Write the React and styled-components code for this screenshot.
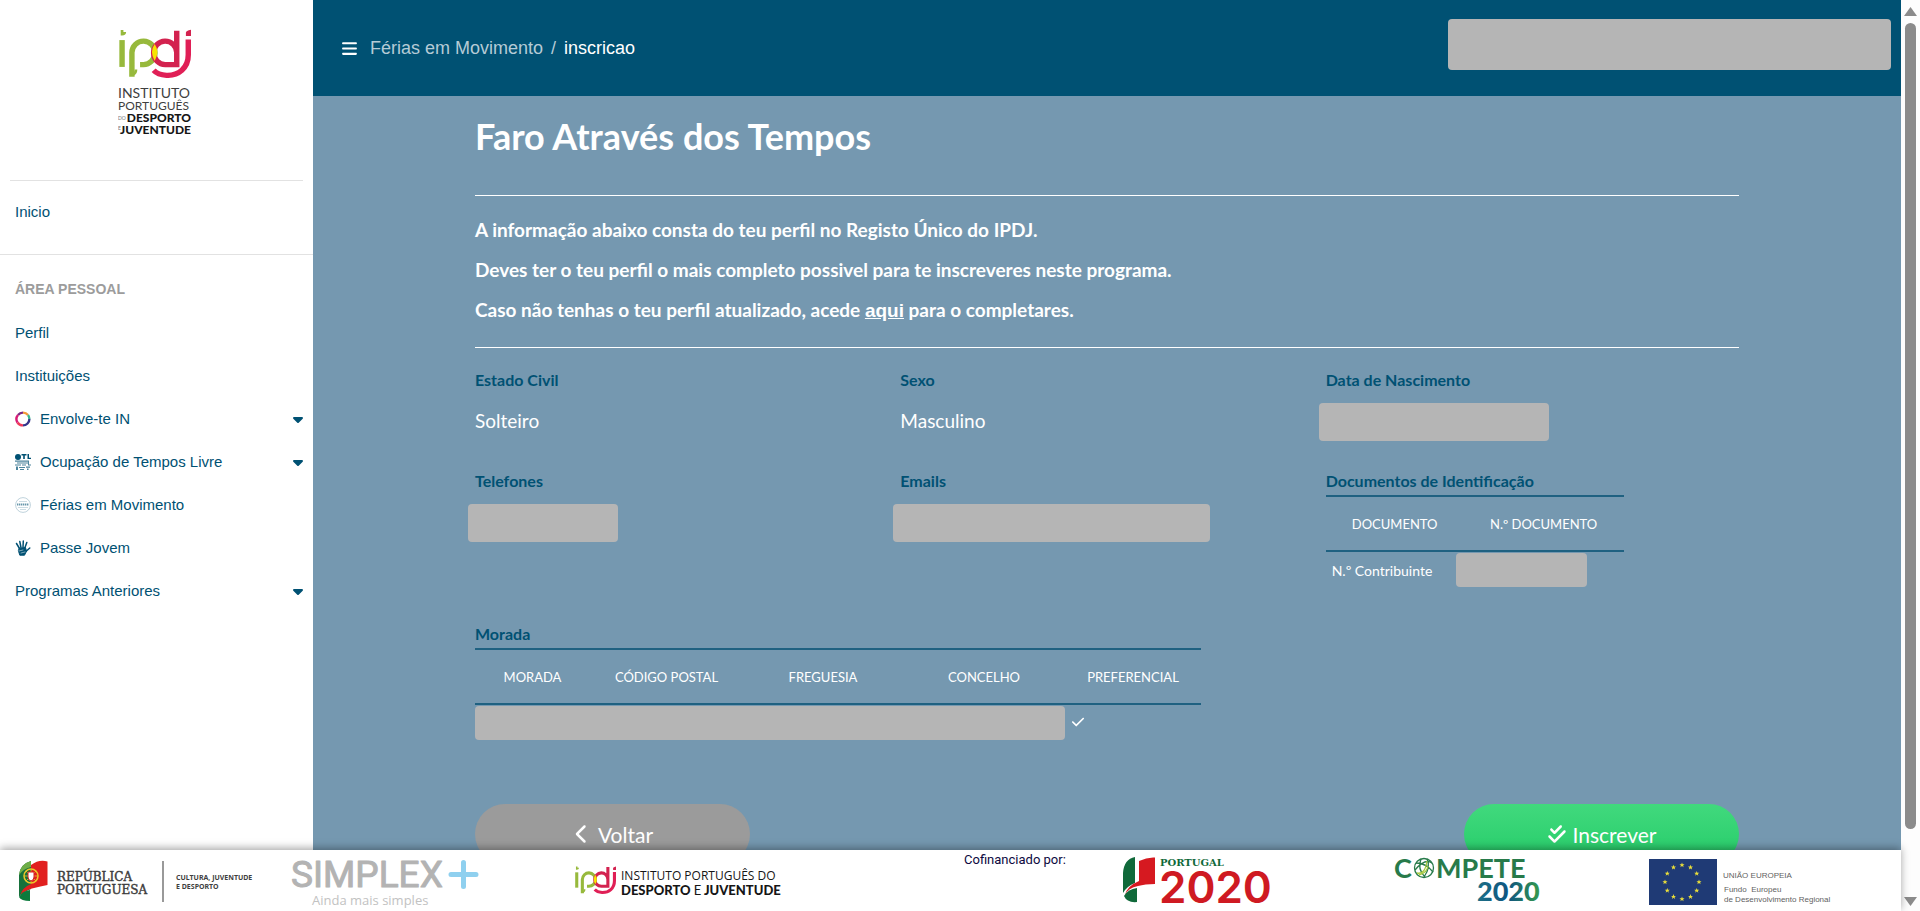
import React from "react";
import styled, { createGlobalStyle } from "styled-components";
import { FaBars, FaCaretDown, FaCheck, FaCheckDouble, FaChevronLeft } from "react-icons/fa6";

const navy = "#005173";
const sans = '"Liberation Sans", Arial, sans-serif';
const round = 'Lato, "Open Sans", sans-serif';

const GlobalStyle = createGlobalStyle`
  *, *::before, *::after { box-sizing: border-box; }
  body { margin: 0; overflow: hidden; background: #fff; font-family: ${sans}; }
`;

const Frame = styled.div`
  display: flex;
  height: 100vh;
`;
const Shell = styled.div`
  flex: 1;
  min-width: 0;
  display: flex;
  flex-direction: column;
`;
const Body = styled.div`
  flex: 1;
  min-height: 0;
  display: flex;
  overflow: hidden;
`;

/* Sidebar */
const Sidebar = styled.aside`
  flex: none;
  width: 313px;
  background: #fff;
`;
const Brand = styled.div`
  display: flex;
  justify-content: center;
  height: 181px;
  margin: 0 10px;
  padding-top: 26px;
  border-bottom: 1px solid #e2e2e2;
`;
const HomeArea = styled.div`
  height: 74px;
  padding-top: 9px;
  border-bottom: 1px solid #e2e2e2;
`;
const SectionTitle = styled.h2`
  margin: 24px 0 12px;
  padding-left: 15px;
  font: bold 14px/20px ${sans};
  color: #9c9c9c;
`;
const Menu = styled.ul`
  list-style: none;
  margin: 0;
  padding: 0;
`;
const MenuLink = styled.a`
  display: flex;
  align-items: center;
  height: 43px;
  padding: 0 10px 0 15px;
  font-size: 15px;
  color: ${navy};
  text-decoration: none;
  > svg:first-child { margin-right: 9px; }
`;
const Caret = styled(FaCaretDown)`
  margin-left: auto;
  width: 10px;
  height: 16px;
`;

/* Main */
const Main = styled.main`
  flex: 1;
  min-width: 0;
  background: #7598b0;
`;
const TopBar = styled.header`
  display: flex;
  justify-content: space-between;
  height: 96px;
  padding: 0 10px 0 28px;
  background: ${navy};
`;
const Crumbs = styled.nav`
  display: flex;
  align-items: center;
  gap: 8px;
  font-size: 18px;
  color: #b5cbd6;
`;
const MenuButton = styled.button`
  display: flex;
  padding: 0;
  border: 0;
  margin-right: 4px;
  background: none;
  color: #fff;
  font-size: 17px;
`;
const CrumbLink = styled.a`
  color: #b5cbd6;
  text-decoration: none;
`;
const Current = styled.span`
  color: #fff;
`;
const Redacted = styled.div`
  width: ${(p) => p.$width}px;
  height: ${(p) => p.$height}px;
  margin: ${(p) => p.$margin || "0"};
  border-radius: 4px;
  background: #b5b5b5;
`;
const Content = styled.div`
  padding: 16px 162px;
  font-family: ${round};
  color: #fff;
`;
const Title = styled.h1`
  margin: 0 0 35px;
  font-size: 36px;
  line-height: 48px;
  font-weight: bold;
`;
const Intro = styled.div`
  padding: 14px 0 16px;
  border-top: 1px solid #fff;
  border-bottom: 1px solid #fff;
`;
const IntroLine = styled.p`
  margin: 0;
  font-size: 19px;
  line-height: 40px;
  font-weight: bold;
  a { font-family: ${sans}; color: #fff; }
`;
const Fields = styled.div`
  display: grid;
  grid-template-columns: repeat(3, 1fr);
  gap: 28px 12px;
  margin-top: 20px;
`;
const Label = styled.h3`
  margin: 0;
  font-size: 16px;
  line-height: 24px;
  font-weight: bold;
  color: ${navy};
`;
const Value = styled.p`
  margin: 10px 0 0;
  font-size: 19px;
  line-height: 38px;
`;
const Table = styled.table`
  margin-top: 2px;
  width: ${(p) => p.$width}px;
  table-layout: fixed;
  border-collapse: separate;
  border-spacing: 0;
  font-size: 14px;
  th {
    height: 57px;
    padding: 0 0 0 ${(p) => p.$indent || 0}px;
    border-top: 2px solid #1f6181;
    border-bottom: 2px solid #1f6181;
    font-size: 13px;
    font-weight: normal;
    text-align: center;
  }
  td { height: 36px; padding: 0 6px; }
`;
const FlushCell = styled.td`
  && { padding: 0; }
`;
const Address = styled.section`
  margin-top: 34px;
`;
const Actions = styled.div`
  display: flex;
  justify-content: space-between;
  margin-top: 63px;
`;
const Action = styled.button`
  display: flex;
  align-items: center;
  justify-content: center;
  gap: 6px;
  width: 275px;
  height: 60px;
  border: 0;
  border-radius: 30px;
  background: ${(p) => (p.$primary ? "linear-gradient(#41d97d, #25cc69)" : "#9b9b9b")};
  color: #fff;
  font: 21px ${round};
`;

/* Footer */
const Footer = styled.footer`
  position: relative;
  flex: none;
  display: grid;
  grid-template-columns: 290fr 285fr 389fr 158fr 272fr 254fr 253fr;
  height: 61px;
  background: #fff;
  box-shadow: 0 -2px 8px rgba(0, 0, 0, 0.35);
  svg { display: block; overflow: visible; }
`;
const Funding = styled.span`
  padding-top: 1px;
  font: 13px/18px Roboto, sans-serif;
  color: #0c0940;
`;

/* Window scroll rail */
const Rail = styled.div`
  flex: none;
  width: 19px;
  display: flex;
  flex-direction: column;
  align-items: center;
  gap: 7px;
  padding: 7px 0 5px;
  background: #fdfdfd;
  svg { display: block; }
`;
const RailTrack = styled.div`
  flex: 1;
  width: 11px;
`;
const RailThumb = styled.div`
  height: 93%;
  border-radius: 6px;
  background: #8b8b8b;
`;

function IpdjMark({ width, height }) {
  return (
    <svg width={width} height={height} viewBox="60 43 212 146" preserveAspectRatio="none" fill="none">
      <g stroke="#97b93c" strokeWidth="16">
        <path d="M69 76V156" />
        <path d="M69 46v12q8 0 8-6" strokeWidth="8" />
        <path d="M98 185V113a34 35 0 1 1 34 36h-10" />
        <path d="M98 178q12 0 12-14" strokeWidth="8" />
      </g>
      <path d="M230 48V113a34 35 0 1 0-34 36h34V108" stroke="#d3224f" strokeWidth="16" />
      <path d="M264 74V120C264 160 235 182 200 181C183 180 170 175 162 166" stroke="#e01f56" strokeWidth="16" />
      <path d="M257 64V54q0-6 15-9v19z" fill="#d3224f" />
      <path d="M165 88q-16 24 0 50q16-26 0-50z" fill="#f6e500" />
    </svg>
  );
}

function SidebarLogo() {
  return (
    <svg width="78" height="112" viewBox="1 0 78 112" role="img" aria-label="IPDJ" fontFamily="Lato, sans-serif">
      <g transform="translate(2 3)"><IpdjMark width={72} height={49} /></g>
      <g fill="#3f3f3f">
        <text x="1" y="72" fontSize="14">INSTITUTO</text>
        <text x="1" y="84" fontSize="12">PORTUGUÊS</text>
      </g>
      <g fill="#777" fontSize="5"><text x="1" y="94">DO</text><text x="1" y="104">E</text></g>
      <g fill="#161616" fontSize="12" fontWeight="900">
        <text x="74" y="96" textAnchor="end">DESPORTO</text>
        <text x="74" y="108" textAnchor="end">JUVENTUDE</text>
      </g>
    </svg>
  );
}

function RingIcon() {
  return (
    <svg width="16" height="16" viewBox="0 0 16 16" fill="none" strokeWidth="2.4">
      <path d="M3 4A6.4 6.4 0 0 1 8 1.6" stroke="#7a2a83" />
      <path d="M8 1.6A6.4 6.4 0 0 1 13 4" stroke="#f39a3a" />
      <path d="M13 4A6.4 6.4 0 0 1 14.4 8" stroke="#3bb58f" />
      <path d="M14.4 8A6.4 6.4 0 0 1 8 14.4" stroke="#36358a" />
      <path d="M8 14.4A6.4 6.4 0 0 1 2.5 11.5" stroke="#ee3b5b" />
      <path d="M2.5 11.5A6.4 6.4 0 0 1 3 4" stroke="#d81b76" />
    </svg>
  );
}
function OtlIcon() {
  return (
    <svg width="16" height="16" viewBox="0 0 16 16" fill={navy}>
      <circle cx="3" cy="3" r="3" />
      <path d="M6.5 0h5v1.5H9.8V5H8.2V1.500H6.500zM12.500 0H14v3.800h2V5h-3.500z" />
      <path d="M0 6.500h13v1.200H0zM2 8.500h12v1H2zM0 10.500h6v1H0zM7 10.500h4v1H7zM13 6.500h1v4h2v1h-3zM1 12.500h2V16H1zM4 13h6v1H4zM11 12.500h4v1.200h-4zM12 14.500h1.500V16H12zM5 15h4v1H5z" opacity=".7" />
    </svg>
  );
}
function FeriasIcon() {
  return (
    <svg width="16" height="16" viewBox="0 0 16 16" fill="none" stroke={navy}>
      <circle cx="8" cy="8" r="7.400" strokeWidth=".5" opacity=".5" />
      <path d="M2 7.500h12" strokeWidth="2" strokeDasharray="1.400 .6" opacity=".6" />
      <path d="M4 4.500h8M3 10.500h10M5 12.500h6" strokeWidth=".5" opacity=".4" />
    </svg>
  );
}
function HandIcon() {
  return (
    <svg width="16" height="16" viewBox="0 0 16 16" fill="none" stroke={navy} strokeLinecap="round">
      <path d="M4.500 8.500L1.500 3.500M6 7.500L4.800 1.500M8 7.500L8.300 1M9.800 8L11.800 2.500M10.800 11.500L14.800 8" strokeWidth="1.500" />
      <path d="M4.500 8.200l6-.6 1 3.600-2 4H4.800L3.500 11z" fill={navy} strokeWidth="1" />
      <path d="M4 11l4-1M6 13l4-1" stroke="#fff" strokeWidth=".5" />
    </svg>
  );
}

function RepublicaLogo() {
  return (
    <svg width="272" height="61" viewBox="0 0 272 61" role="img" aria-label="República Portuguesa">
      <path d="M19 47V25Q20 14 31 11V39Q22 42 19 47z" fill="#17713b" />
      <path d="M19 25Q20 14 31 11v6Q23 19 19 25z" fill="#6fae48" />
      <path d="M31 15Q39 9 47.500 11.500V35Q41 36 32 38.500Q24 40.500 20.500 46Q21 38 31 34z" fill="#e1201f" />
      <path d="M19 47Q22 41 30 40V51Q21 51 19 47z" fill="#0c7a3c" />
      <circle cx="31" cy="26" r="7" fill="none" stroke="#ecc629" strokeWidth="1.500" />
      <path d="M24 26h14M31 19v14M26 21l10 10M36 21L26 31" stroke="#ecc629" strokeWidth=".8" />
      <path d="M28 22h6v5q0 3-3 4q-3-1-3-4z" fill="#fff" stroke="#d3201f" />
      <g fill="#3c3c3c" stroke="#3c3c3c" strokeWidth=".4" fontFamily='"DejaVu Serif", serif' fontSize="12">
        <text x="57" y="31">REPÚBLICA</text>
        <text x="57" y="44">PORTUGUESA</text>
      </g>
      <path d="M163 11v41" stroke="#777" strokeWidth="1.500" />
      <g fill="#3f3f3f" fontFamily='"Noto Sans", sans-serif' fontWeight="bold" fontSize="7">
        <text x="176" y="30">CULTURA, JUVENTUDE</text>
        <text x="176" y="39">E DESPORTO</text>
      </g>
    </svg>
  );
}
function SimplexLogo() {
  return (
    <svg width="190" height="61" viewBox="0 0 190 61" role="img" aria-label="Simplex+">
      <text x="1" y="37" fontFamily="Roboto, sans-serif" fontSize="37" fill="#b3b3b3" stroke="#b3b3b3" strokeWidth="1" strokeLinejoin="round">SIMPLEX</text>
      <path d="M161 24.500h25M173.500 12.500v24" stroke="#8fd0ef" strokeWidth="5" strokeLinecap="round" />
      <text x="22" y="55" fontFamily='"Open Sans", sans-serif' fontSize="13" fill="#c2c2c2">Ainda mais simples</text>
    </svg>
  );
}
function IpdjWideLogo() {
  return (
    <svg width="215" height="61" viewBox="0 0 215 61" role="img" aria-label="IPDJ" fontFamily="Lato, sans-serif" fontSize="13" fill="#161616">
      <g transform="translate(0 16)"><IpdjMark width={41} height={28} /></g>
      <text x="46" y="30" fontFamily='"Open Sans", sans-serif' fontSize="12">INSTITUTO PORTUGUÊS DO</text>
      <text x="46" y="45" fontWeight="900">DESPORTO <tspan fontWeight="400">E</tspan> JUVENTUDE</text>
    </svg>
  );
}
function Portugal2020Logo() {
  return (
    <svg width="155" height="61" viewBox="0 0 155 61" role="img" aria-label="Portugal 2020">
      <path d="M1 43V23Q2 9 13 7V33Q5 36 1 43z" fill="#10693a" />
      <path d="M17 11Q25 7 33 7.500V34Q23 34 16 36Q6 38 3 45Q5 36 17 31z" fill="#d61920" />
      <path d="M2 46Q6 39 15 38V52Q5 53 2 46z" fill="#10693a" />
      <text x="38" y="16" fontFamily='"DejaVu Serif", serif' fontWeight="bold" fontSize="10" fill="#10693a">PORTUGAL</text>
      <text x="37" y="53" fontFamily="Inter, sans-serif" fontWeight="600" fontSize="44" fill="#cf1a22">2020</text>
    </svg>
  );
}
function CompeteLogo() {
  return (
    <svg width="150" height="61" viewBox="0 0 150 61" role="img" aria-label="Compete 2020" fontFamily="Lato, sans-serif" fontWeight="bold" fontSize="27">
      <defs>
        <linearGradient id="tide" x1="0" x2="1">
          <stop offset="0" stopColor="#1d6f86" />
          <stop offset=".5" stopColor="#0f5580" />
          <stop offset="1" stopColor="#369b4c" />
        </linearGradient>
      </defs>
      <text x="0" y="28" fill="#277a4a">C</text>
      <g fill="none" stroke="#277a4a" strokeWidth="1.300">
        <circle cx="30" cy="18" r="9.500" />
        <path d="M22 13q10 0 17 9M21 20q10-12 17-7M27 9q-4 10 4 18M33 9q4 8-3 18" />
        <path d="M23 23q8 2 10-12M25 25q8-2 9-9" stroke="#a6c83c" />
      </g>
      <text x="42" y="28" fill="#277a4a">MPETE</text>
      <text x="83" y="51" fontWeight="900" fill="url(#tide)">2020</text>
    </svg>
  );
}
function EuLogo() {
  const stars = Array.from({ length: 12 }, (_, i) => {
    const a = (i * Math.PI) / 6;
    return [34 + 17 * Math.sin(a), 32 - 17 * Math.cos(a)];
  });
  return (
    <svg width="195" height="61" viewBox="0 0 195 61" role="img" aria-label="União Europeia">
      <rect x="1" y="9" width="68" height="46" fill="#1f3a75" />
      {stars.map(([x, y], i) => (
        <path key={i} transform={`translate(${x} ${y})`} d="M0-2.600L.7-.8 2.500-.8 1.100.4 1.600 2.200 0 1.100-1.600 2.200-1.100.4-2.500-.8-.7-.8z" fill="#eade3a" />
      ))}
      <g fill="#5f5f5f" fontFamily={sans} fontSize="8">
        <text x="75" y="28">UNIÃO EUROPEIA</text>
        <text x="76" y="42">Fundo&#160; Europeu</text>
        <text x="76" y="52">de Desenvolvimento Regional</text>
      </g>
    </svg>
  );
}

const menu = [
  { text: "Perfil" },
  { text: "Instituições" },
  { text: "Envolve-te IN", Icon: RingIcon, open: true },
  { text: "Ocupação de Tempos Livre", Icon: OtlIcon, open: true },
  { text: "Férias em Movimento", Icon: FeriasIcon },
  { text: "Passe Jovem", Icon: HandIcon },
  { text: "Programas Anteriores", open: true },
];

export default function App() {
  return (
    <Frame>
      <GlobalStyle />
      <Shell>
        <Body>
          <Sidebar>
            <Brand><SidebarLogo /></Brand>
            <HomeArea><MenuLink href="#inicio">Inicio</MenuLink></HomeArea>
            <SectionTitle>ÁREA PESSOAL</SectionTitle>
            <Menu>
              {menu.map(({ text, Icon, open }) => (
                <li key={text}>
                  <MenuLink href="#menu">
                    {Icon && <Icon />}
                    <span>{text}</span>
                    {open && <Caret />}
                  </MenuLink>
                </li>
              ))}
            </Menu>
          </Sidebar>
          <Main>
            <TopBar>
              <Crumbs>
                <MenuButton aria-label="Menu"><FaBars /></MenuButton>
                <CrumbLink href="#ferias">Férias em Movimento</CrumbLink>
                <span>/</span>
                <Current>inscricao</Current>
              </Crumbs>
              <Redacted $width={443} $height={51} $margin="19px 0 0" />
            </TopBar>
            <Content>
              <Title>Faro Através dos Tempos</Title>
              <Intro>
                <IntroLine>A informação abaixo consta do teu perfil no Registo Único do IPDJ.</IntroLine>
                <IntroLine>Deves ter o teu perfil o mais completo possivel para te inscreveres neste programa.</IntroLine>
                <IntroLine>Caso não tenhas o teu perfil atualizado, acede <a href="#perfil">aqui</a> para o completares.</IntroLine>
              </Intro>
              <Fields>
                <div><Label>Estado Civil</Label><Value>Solteiro</Value></div>
                <div><Label>Sexo</Label><Value>Masculino</Value></div>
                <div><Label>Data de Nascimento</Label><Redacted $width={230} $height={38} $margin="11px 0 0 -7px" /></div>
                <div><Label>Telefones</Label><Redacted $width={150} $height={38} $margin="11px 0 0 -7px" /></div>
                <div><Label>Emails</Label><Redacted $width={317} $height={38} $margin="11px 0 0 -7px" /></div>
                <div>
                  <Label>Documentos de Identificação</Label>
                  <Table $width={298} $indent={8}>
                    <colgroup><col width="130" /><col /></colgroup>
                    <thead><tr><th>DOCUMENTO</th><th>N.º DOCUMENTO</th></tr></thead>
                    <tbody><tr><td>N.º Contribuinte</td><FlushCell><Redacted $width={131} $height={34} /></FlushCell></tr></tbody>
                  </Table>
                </div>
              </Fields>
              <Address>
                <Label>Morada</Label>
                <Table $width={726}>
                  <colgroup>
                    <col width="115" /><col width="153" /><col width="160" /><col width="162" /><col width="136" />
                  </colgroup>
                  <thead>
                    <tr><th>MORADA</th><th>CÓDIGO POSTAL</th><th>FREGUESIA</th><th>CONCELHO</th><th>PREFERENCIAL</th></tr>
                  </thead>
                  <tbody>
                    <tr><FlushCell colSpan={4}><Redacted $width={590} $height={34} /></FlushCell><td><FaCheck aria-label="Sim" /></td></tr>
                  </tbody>
                </Table>
              </Address>
              <Actions>
                <Action type="button"><FaChevronLeft size={20} />Voltar</Action>
                <Action type="button" $primary><FaCheckDouble size={20} />Inscrever</Action>
              </Actions>
            </Content>
          </Main>
        </Body>
        <Footer>
          <RepublicaLogo />
          <SimplexLogo />
          <IpdjWideLogo />
          <Funding>Cofinanciado por:</Funding>
          <Portugal2020Logo />
          <CompeteLogo />
          <EuLogo />
        </Footer>
      </Shell>
      <Rail aria-hidden="true">
        <svg width="13" height="9"><path d="M6.500 0L13 9H0z" fill="#8b8b8b" /></svg>
        <RailTrack><RailThumb /></RailTrack>
        <svg width="13" height="9"><path d="M0 0h13L6.500 9z" fill="#8b8b8b" /></svg>
      </Rail>
    </Frame>
  );
}
